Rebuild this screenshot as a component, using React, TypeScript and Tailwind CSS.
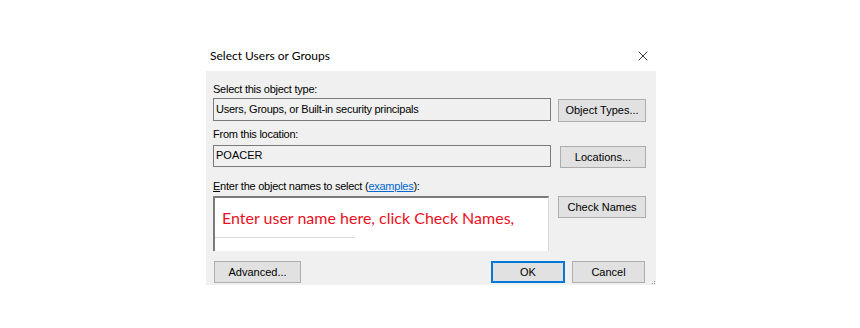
import { X } from 'lucide-react';

const body = { fontFamily: '"Liberation Sans", Arial, sans-serif' };

const Btn = ({ label, primary, className }: { label: string; primary?: boolean; className?: string }) => (
  <button
    className={`flex items-center justify-center bg-[#e1e1e1] text-[11px] text-black ${
      primary ? 'border-2 border-[#0078d7]' : 'border border-[#adadad]'
    } ${className ?? ''}`}
  >
    {label}
  </button>
);

const App = () => {
  return (
    <div className="w-[860px] h-[328px] bg-white flex justify-center pt-[35px]" style={body}>
      <div className="w-[470px] flex flex-col">
        {/* Title bar */}
        <div className="h-[36px] flex items-center justify-between pl-[15px] pr-[14px] pt-[5px]">
          <span className="text-[12px] text-black" style={{ fontFamily: 'Lato, "Liberation Sans", sans-serif' }}>
            Select Users or Groups
          </span>
          <X size={16} strokeWidth={1.2} className="text-black" />
        </div>

        {/* Body */}
        <div className="ml-[11px] w-[450px] h-[214px] bg-[#f0f0f0] pl-[7px] pr-[10px] pt-[10px] relative">
          <div className="text-[11px] leading-[16px] tracking-[-0.25px] text-black">Select this object type:</div>
          <div className="flex gap-[7px] mt-[1px]">
            <div className="w-[338px] h-[23px] border border-[#7a7a7a] bg-[#f0f0f0] px-[2px] text-[11px] leading-[20px] tracking-[-0.25px] text-black">
              Users, Groups, or Built-in security principals
            </div>
            <Btn label="Object Types..." className="w-[88px] h-[23px] mt-[1px]" />
          </div>

          <div className="text-[11px] leading-[16px] tracking-[-0.25px] text-black mt-[4px]">From this location:</div>
          <div className="flex gap-[7px] mt-[3px]">
            <div className="w-[338px] h-[22px] border border-[#7a7a7a] bg-[#f0f0f0] px-[2px] text-[11px] leading-[19px] text-black">
              POACER
            </div>
            <Btn label="Locations..." className="w-[86px] h-[22px] ml-[2px] mt-[1px]" />
          </div>

          <div className="text-[11px] leading-[16px] tracking-[-0.25px] text-black mt-[10px]">
            <span className="underline">E</span>nter the object names to select (
            <span className="text-[#0066cc] underline">examples</span>):
          </div>
          <div className="flex gap-[9px] mt-[2px]">
            <div className="w-[336px] h-[55px] border-t-2 border-l-2 border-[#7a7a7a] border-r border-r-[#d9d9d9] bg-white flex flex-col">
              <div
                className="h-[39px] pl-[7px] pt-[9px] text-[16px] leading-[22px] text-[#e81123] whitespace-nowrap"
                style={{ fontFamily: 'Lato, "Liberation Sans", sans-serif' }}
              >
                Enter user name here, click Check Names,
              </div>
              <div className="w-[140px] border-t border-[#d9d9d9]" />
            </div>
            <Btn label="Check Names" className="w-[88px] h-[22px]" />
          </div>

          <div className="flex mt-[10px]">
            <Btn label="Advanced..." className="w-[87px] h-[22px] ml-[1px]" />
            <Btn label="OK" primary className="w-[74px] h-[22px] ml-[190px]" />
            <Btn label="Cancel" className="w-[73px] h-[22px] ml-[7px]" />
          </div>

          {/* resize grip */}
          <div className="absolute right-[1px] bottom-[1px] grid grid-cols-2 gap-[1px]">
            <span className="w-[1px] h-[1px]" />
            <span className="w-[1px] h-[1px] bg-[#a0a0a0]" />
            <span className="w-[1px] h-[1px] bg-[#a0a0a0]" />
            <span className="w-[1px] h-[1px] bg-[#a0a0a0]" />
          </div>
        </div>
      </div>
    </div>
  );
};

export default App;
